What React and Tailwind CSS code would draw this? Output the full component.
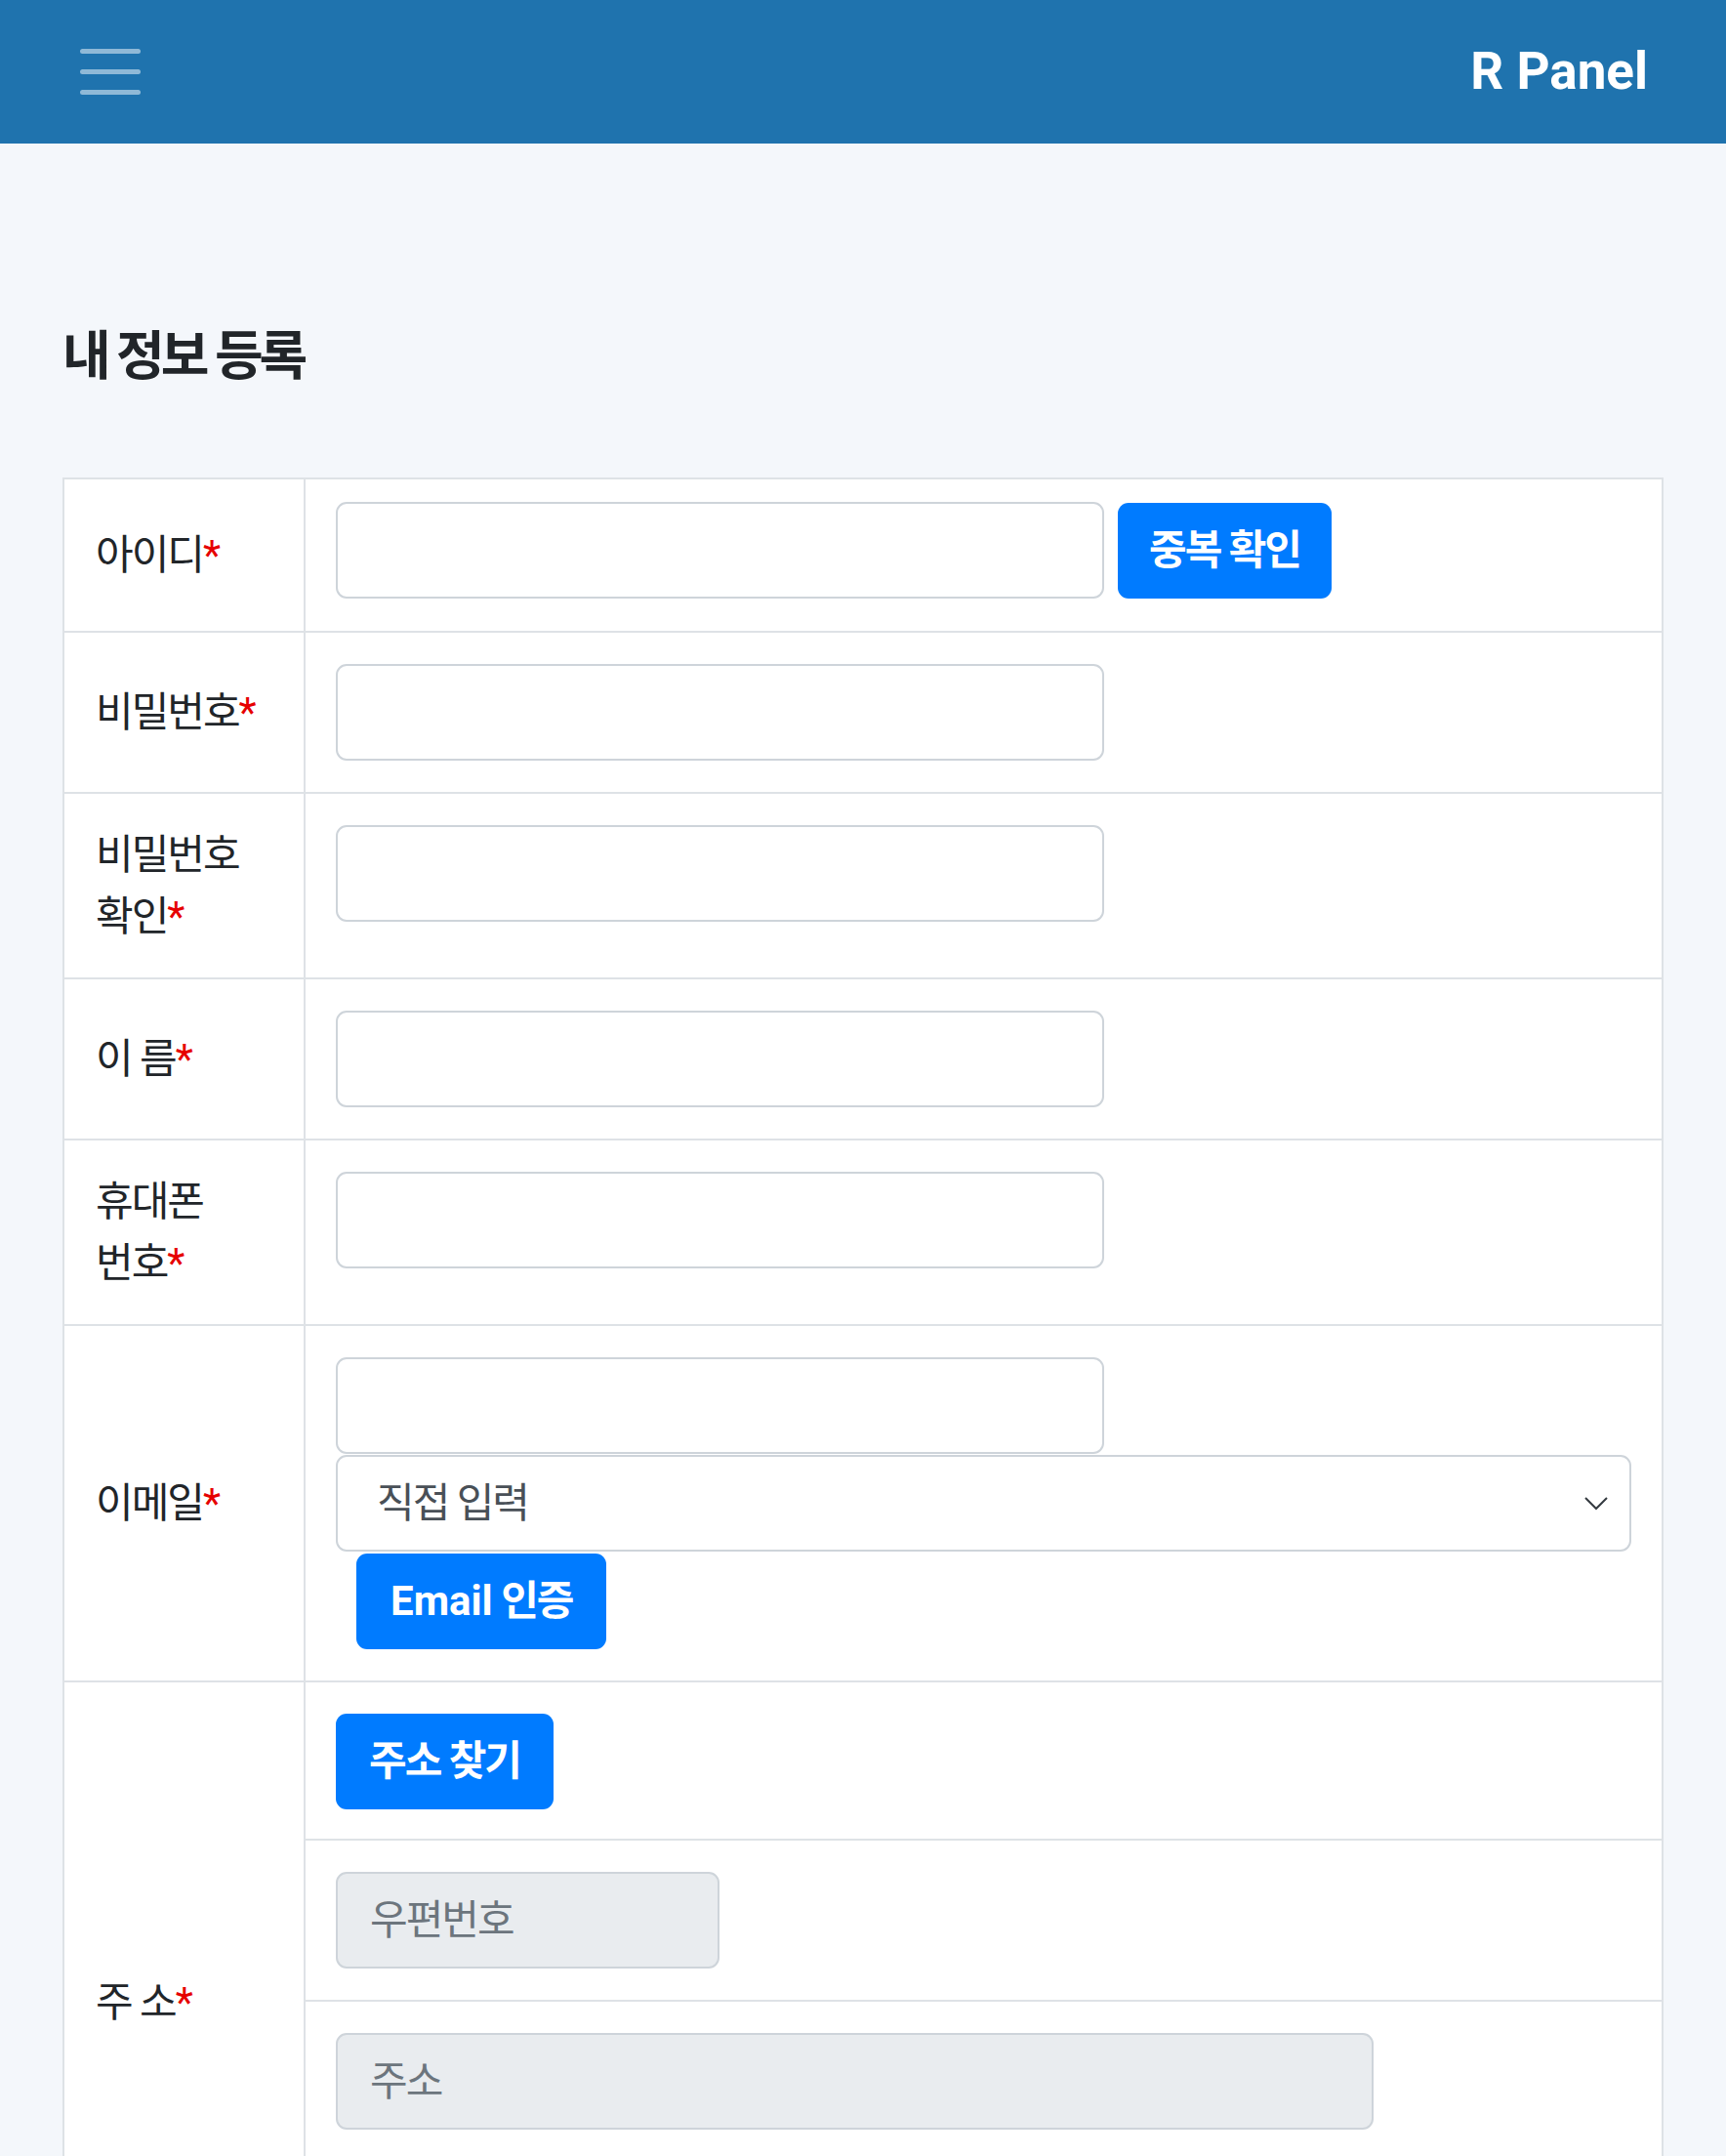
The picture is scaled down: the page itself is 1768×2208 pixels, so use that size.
import { useState } from "react";

const fieldBox =
    "h-[99px] border-2 border-[#ced4da] rounded-[11px] bg-white";

const blueBtn =
    "h-[98px] bg-[#007bff] text-white font-bold text-[42px] tracking-[-2px] rounded-[11px] px-[32px] leading-none";

const readOnlyBox =
    "h-[99px] border-2 border-[#ced4da] rounded-[11px] bg-[#e9ecef] px-[33px] text-[42px] tracking-[-2px] text-[#495057] placeholder:text-[#6c757d] block";

function Label({ children, rowSpan }) {
    return (
        <td
            rowSpan={rowSpan}
            className="w-[247px] border-2 border-[#dee2e6] px-[32px] py-[31px] align-middle text-[42px] tracking-[-2px] leading-[63px] text-[#212529]"
        >
            {children}
            <span className="text-[#e60000]">*</span>
        </td>
    );
}

function Cell({ children, className = "" }) {
    return (
        <td
            className={
                "border-2 border-[#dee2e6] px-[31px] py-[32px] align-top " +
                className
            }
        >
            {children}
        </td>
    );
}

export default function App() {
    const [domain, setDomain] = useState("직접 입력");

    return (
        <div className="min-h-screen bg-[#f4f7fb] font-['Roboto','Noto_Sans_CJK_KR',sans-serif] text-[#212529]">
            <header className="h-[147px] bg-[#1f73ae] flex items-center justify-between pl-[82px] pr-[80px]">
                <div className="flex flex-col gap-[16px]">
                    <span className="block w-[62px] h-[5px] rounded-full bg-white/50" />
                    <span className="block w-[62px] h-[5px] rounded-full bg-white/50" />
                    <span className="block w-[62px] h-[5px] rounded-full bg-white/50" />
                </div>
                <span className="text-white font-bold text-[53px] leading-none">
                    R Panel
                </span>
            </header>

            <main className="px-[64px] pt-[186px] pb-[60px]">
                <h4 className="text-[54px] tracking-[-4px] leading-[66px] font-bold mb-[90px]">
                    내 정보 등록
                </h4>

                <table className="w-full border-collapse bg-white">
                    <tbody>
                        <tr>
                            <Label>아이디</Label>
                            <Cell className="!pt-[23px] !pb-[33px]">
                                <div className="flex items-center gap-[14px]">
                                    <input className={fieldBox + " w-[787px]"} />
                                    <button className={blueBtn}>
                                        중복 확인
                                    </button>
                                </div>
                            </Cell>
                        </tr>
                        <tr>
                            <Label>비밀번호</Label>
                            <Cell>
                                <input type="password" className={fieldBox + " w-[787px] block"} />
                            </Cell>
                        </tr>
                        <tr>
                            <Label>
                                비밀번호
                                <br />
                                확인
                            </Label>
                            <Cell>
                                <input type="password" className={fieldBox + " w-[787px] block"} />
                            </Cell>
                        </tr>
                        <tr>
                            <Label>이 름</Label>
                            <Cell>
                                <input className={fieldBox + " w-[787px] block"} />
                            </Cell>
                        </tr>
                        <tr>
                            <Label>
                                휴대폰
                                <br />
                                번호
                            </Label>
                            <Cell>
                                <input className={fieldBox + " w-[787px] block"} />
                            </Cell>
                        </tr>
                        <tr>
                            <Label>이메일</Label>
                            <Cell>
                                <div className="flex flex-col items-start">
                                    <input className={fieldBox + " w-[787px] block"} />
                                    <div
                                        onClick={() => setDomain(domain)}
                                        className={
                                            fieldBox +
                                            " w-full mt-[1px] flex items-center justify-between pl-[40px] pr-[12px] text-[42px] tracking-[-2px] text-[#495057]"
                                        }
                                    >
                                        <span>{domain}</span>
                                        <svg
                                            width="24"
                                            height="14"
                                            viewBox="0 0 24 14"
                                            fill="none"
                                            stroke="#343a40"
                                            strokeWidth="2"
                                            className="mr-[10px]"
                                        >
                                            <path d="M1 1l11 11L23 1" />
                                        </svg>
                                    </div>
                                    <button className={blueBtn + " ml-[21px] mt-[2px] px-[35px]"}>
                                        <span className="tracking-normal">Email</span> 인증
                                    </button>
                                </div>
                            </Cell>
                        </tr>
                        <tr>
                            <Label rowSpan={4}>주 소</Label>
                            <Cell className="!pb-[30px]">
                                <button className={blueBtn + " px-[34px]"}>
                                    주소 찾기
                                </button>
                            </Cell>
                        </tr>
                        <tr>
                            <Cell>
                                <input
                                    readOnly
                                    placeholder="우편번호"
                                    className={readOnlyBox + " w-[393px]"}
                                />
                            </Cell>
                        </tr>
                        <tr>
                            <Cell>
                                <input
                                    readOnly
                                    placeholder="주소"
                                    className={readOnlyBox + " w-[1063px]"}
                                />
                            </Cell>
                        </tr>
                        <tr>
                            <Cell>
                                <input
                                    placeholder="상세주소"
                                    className={fieldBox + " w-[1063px] block px-[33px] text-[42px] tracking-[-2px] placeholder:text-[#6c757d]"}
                                />
                            </Cell>
                        </tr>
                    </tbody>
                </table>
            </main>
        </div>
    );
}
